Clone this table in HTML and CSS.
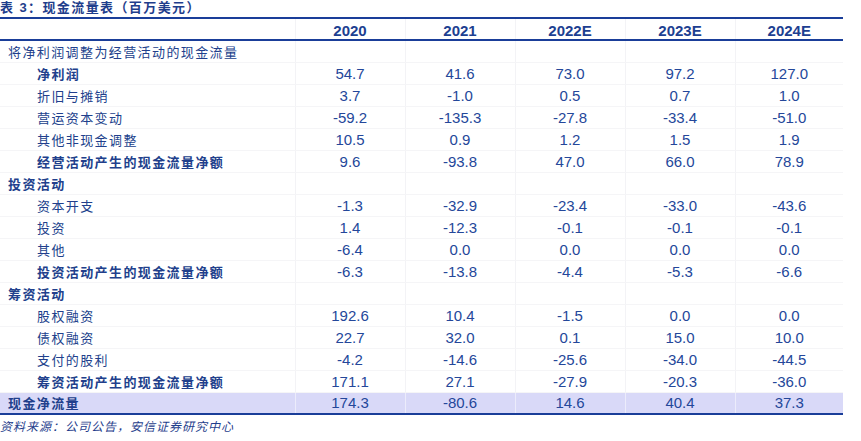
FILE: index.html
```html
<!DOCTYPE html>
<html lang="zh">
<head>
<meta charset="utf-8">
<link rel="stylesheet" href="styles.css">
</head>
<body>
<div class="title">表 3：现金流量表（百万美元）</div>
<table class="tbl">
  <colgroup>
    <col class="c-label"><col class="c-num"><col class="c-num"><col class="c-num"><col class="c-num"><col class="c-last">
  </colgroup>
  <thead>
    <tr><th></th><th>2020</th><th>2021</th><th>2022E</th><th>2023E</th><th>2024E</th></tr>
  </thead>
  <tbody>
    <tr><td class="lbl l0">将净利润调整为经营活动的现金流量</td><td></td><td></td><td></td><td></td><td></td></tr>
    <tr><td class="lbl l1 b">净利润</td><td>54.7</td><td>41.6</td><td>73.0</td><td>97.2</td><td>127.0</td></tr>
    <tr><td class="lbl l1">折旧与摊销</td><td>3.7</td><td>-1.0</td><td>0.5</td><td>0.7</td><td>1.0</td></tr>
    <tr><td class="lbl l1">营运资本变动</td><td>-59.2</td><td>-135.3</td><td>-27.8</td><td>-33.4</td><td>-51.0</td></tr>
    <tr><td class="lbl l1">其他非现金调整</td><td>10.5</td><td>0.9</td><td>1.2</td><td>1.5</td><td>1.9</td></tr>
    <tr><td class="lbl l1 b">经营活动产生的现金流量净额</td><td>9.6</td><td>-93.8</td><td>47.0</td><td>66.0</td><td>78.9</td></tr>
    <tr><td class="lbl l0 b">投资活动</td><td></td><td></td><td></td><td></td><td></td></tr>
    <tr><td class="lbl l1">资本开支</td><td>-1.3</td><td>-32.9</td><td>-23.4</td><td>-33.0</td><td>-43.6</td></tr>
    <tr><td class="lbl l1">投资</td><td>1.4</td><td>-12.3</td><td>-0.1</td><td>-0.1</td><td>-0.1</td></tr>
    <tr><td class="lbl l1">其他</td><td>-6.4</td><td>0.0</td><td>0.0</td><td>0.0</td><td>0.0</td></tr>
    <tr><td class="lbl l1 b">投资活动产生的现金流量净额</td><td>-6.3</td><td>-13.8</td><td>-4.4</td><td>-5.3</td><td>-6.6</td></tr>
    <tr><td class="lbl l0 b">筹资活动</td><td></td><td></td><td></td><td></td><td></td></tr>
    <tr><td class="lbl l1">股权融资</td><td>192.6</td><td>10.4</td><td>-1.5</td><td>0.0</td><td>0.0</td></tr>
    <tr><td class="lbl l1">债权融资</td><td>22.7</td><td>32.0</td><td>0.1</td><td>15.0</td><td>10.0</td></tr>
    <tr><td class="lbl l1">支付的股利</td><td>-4.2</td><td>-14.6</td><td>-25.6</td><td>-34.0</td><td>-44.5</td></tr>
    <tr><td class="lbl l1 b">筹资活动产生的现金流量净额</td><td>171.1</td><td>27.1</td><td>-27.9</td><td>-20.3</td><td>-36.0</td></tr>
    <tr class="hl"><td class="lbl l0 b">现金净流量</td><td>174.3</td><td>-80.6</td><td>14.6</td><td>40.4</td><td>37.3</td></tr>
  </tbody>
</table>
<div class="source">资料来源：公司公告，安信证券研究中心</div>
</body>
</html>
```
FILE: styles.css
```css
html, body {
  margin: 0;
  padding: 0;
  background: #ffffff;
}
body {
  color: #1f3e8c;
  font-family: "Liberation Sans", "Noto Sans CJK SC", sans-serif;
}
.title {
  height: 17px;
  line-height: 16px;
  font-size: 13px;
  font-weight: bold;
  color: #1f3e8c;
  font-family: "Liberation Sans", "Noto Sans CJK SC", sans-serif;
  letter-spacing: 1.4px;
  white-space: nowrap;
}
.tbl {
  border-collapse: collapse;
  table-layout: fixed;
  width: 843px;
  border-top: 2px solid #1a3e99;
  border-bottom: 2px solid #1a3e99;
}
.c-label { width: 295px; }
.c-num { width: 110px; }
.c-last { width: 108px; }
.tbl th {
  height: 16px;
  padding: 4px 0 0 0;
  line-height: 16px;
  font-size: 15px;
  font-weight: bold;
  text-align: center;
  color: #1d3f91;
  border-bottom: 2px solid #1a3e99;
  border-left: 1px solid #f3f3f6;
}
.tbl th:first-child { border-left: none; }
.tbl td {
  height: 21px;
  line-height: 20px;
  padding: 0;
  font-size: 15px;
  text-align: center;
  color: #24479a;
  border-bottom: 1px solid #f5f5f7;
  border-left: 1px solid #f3f3f6;
  white-space: nowrap;
}
.tbl td.lbl {
  text-align: left;
  border-left: none;
  font-family: "Noto Sans CJK SC", sans-serif;
  font-size: 13px;
  letter-spacing: 1.4px;
  color: #213f8c;
}
.tbl td.l0 { padding-left: 8px; }
.tbl td.l1 { padding-left: 37px; }
.tbl td.b { font-weight: bold; }
.tbl tr.hl td {
  height: 20px;
  background: #d9d9f8;
  border-bottom: none;
  border-left-color: #ececfb;
}
.source {
  margin-top: 3px;
  font-family: "Noto Sans CJK SC", sans-serif;
  font-size: 12px;
  font-style: italic;
  letter-spacing: 1px;
  color: #1f3e8c;
  line-height: 16px;
}
```
